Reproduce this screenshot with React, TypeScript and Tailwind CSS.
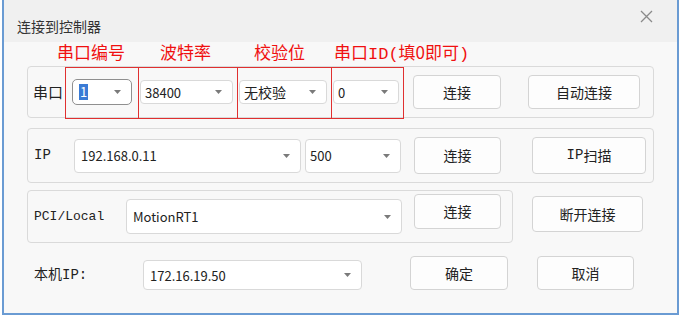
import React from "react";

const cjk = { fontFamily: '"Noto Sans CJK SC", "Noto Sans", sans-serif' };
const mono = { fontFamily: '"Liberation Mono", "Noto Sans CJK SC", monospace' };

function Arrow() {
  return (
    <svg width="7" height="4" viewBox="0 0 7 4" className="shrink-0">
      <path d="M0 0 L7 0 L3.5 4 Z" fill="#7a7a7a" />
    </svg>
  );
}

function Select({
  w,
  h = 24,
  children,
}: {
  w: string;
  h?: number;
  children: React.ReactNode;
}) {
  return (
    <div
      className={`${w} flex items-center justify-between rounded-[4px] border border-[#d9d9d9] bg-white pl-[4px] pr-[10px] text-[13px] text-[#222]`}
      style={{ ...cjk, height: h }}
    >
      <span className="leading-none">{children}</span>
      <Arrow />
    </div>
  );
}

function Btn({ w, h = 34, children }: { w: string; h?: number; children: React.ReactNode }) {
  return (
    <div
      className={`${w} flex items-center justify-center rounded-[4px] border border-[#d4d4d4] bg-[#fdfdfd] text-[14px] text-[#222]`}
      style={{ ...cjk, height: h }}
    >
      {children}
    </div>
  );
}

export default function App() {
  return (
    <div className="h-[317px] w-[682px] bg-white">
      <div className="ml-[2px] flex h-[315px] w-[677px] flex-col border-x-2 border-b-2 border-[#6a9bd3] bg-[#f8f8f8]">
        {/* title bar */}
        <div className="flex h-[42px] shrink-0 items-center justify-between bg-[#f0f0f0] pl-[13px] pr-[24px]">
          <span className="pt-[10px] text-[14px] text-[#333]" style={cjk}>
            连接到控制器
          </span>
          <svg width="13" height="13" viewBox="0 0 13 13" className="mb-[10px]">
            <path d="M1 1 L12 12 M12 1 L1 12" stroke="#8a8a8a" strokeWidth="1.3" />
          </svg>
        </div>

        {/* red labels */}
        <div className="relative h-[22px] text-[17px] leading-[20px] text-[#f01010]" style={cjk}>
          <span className="absolute left-[53px] top-[0px]">串口编号</span>
          <span className="absolute left-[156px] top-[0px]">波特率</span>
          <span className="absolute left-[250px] top-[0px]">校验位</span>
          <span className="absolute left-[330px] top-[0px]">
            串口<span style={mono}>ID(</span>填0即可<span style={mono}>)</span>
          </span>
        </div>

        {/* group 1 */}
        <div className="relative ml-[23px] mt-[2px] flex h-[52px] w-[627px] items-center rounded-[4px] border border-[#dadada] pl-[5px]">
          <span className="w-[39px] text-[15px] text-[#222]" style={cjk}>
            串口
          </span>
          <div
            className="flex h-[26px] w-[60px] items-center justify-between rounded-[5px] border border-[#8f8f8f] bg-white pl-[6px] pr-[10px] text-[13px]"
            style={cjk}
          >
            <span className="bg-[#3a7bd5] px-[1px] leading-[16px] text-white">1</span>
            <Arrow />
          </div>
          <div className="ml-[8px]">
            <Select w="w-[93px]">38400</Select>
          </div>
          <div className="ml-[6px]">
            <Select w="w-[88px]">
              <span className="text-[14px]">无校验</span>
            </Select>
          </div>
          <div className="ml-[6px]">
            <Select w="w-[66px]">0</Select>
          </div>
          <div className="ml-[14px]">
            <Btn w="w-[88px]">连接</Btn>
          </div>
          <div className="ml-[27px]">
            <Btn w="w-[112px]">自动连接</Btn>
          </div>
          {/* red annotation boxes */}
          <div className="pointer-events-none absolute left-[37px] top-[0px] flex h-[52px] w-[339px] border border-[#e03030]">
            <div className="w-[73px] border-r border-[#e03030]" />
            <div className="w-[99px] border-r border-[#e03030]" />
            <div className="w-[94px] border-r border-[#e03030]" />
            <div className="flex-1" />
          </div>
        </div>

        {/* group 2 */}
        <div className="ml-[23px] mt-[10px] flex h-[55px] w-[627px] items-center rounded-[4px] border border-[#dadada] pl-[6px]">
          <span className="w-[40px] text-[14px] text-[#222]" style={mono}>
            IP
          </span>
          <div className="flex items-center gap-[4px]">
            <Select w="w-[227px]" h={34}>
              <span className="pl-[2px]">192.168.0.11</span>
            </Select>
            <Select w="w-[96px]" h={34}>
              500
            </Select>
          </div>
          <div className="ml-[13px]">
            <Btn w="w-[87px]" h={37}>
              连接
            </Btn>
          </div>
          <div className="ml-[31px]">
            <Btn w="w-[114px]" h={37}>
              <span style={mono} className="text-[14px]">IP</span>扫描
            </Btn>
          </div>
        </div>

        {/* group 3 + button */}
        <div className="mt-[7px] flex items-start">
          <div className="ml-[23px] flex h-[53px] w-[486px] items-center rounded-[4px] border border-[#dadada] pl-[6px]">
            <span className="w-[92px] text-[13px] text-[#222]" style={mono}>
              PCI/Local
            </span>
            <Select w="w-[276px]" h={35}>
              <span className="pl-[2px]">MotionRT1</span>
            </Select>
            <div className="ml-[12px] -mt-[10px]">
              <Btn w="w-[87px]" h={35}>
                连接
              </Btn>
            </div>
          </div>
          <div className="ml-[19px] mt-[6px]">
            <Btn w="w-[111px]" h={36}>
              断开连接
            </Btn>
          </div>
        </div>

        {/* bottom row */}
        <div className="ml-[30px] mt-[13px] flex items-start">
          <span className="mt-[7px] w-[109px] text-[14px] text-[#222]" style={cjk}>
            本机<span style={mono}>IP:</span>
          </span>
          <div className="mt-[4px]">
            <Select w="w-[219px]" h={30}>
              <span className="pl-[2px]">172.16.19.50</span>
            </Select>
          </div>
          <div className="ml-[48px]">
            <Btn w="w-[98px]">确定</Btn>
          </div>
          <div className="ml-[29px]">
            <Btn w="w-[97px]">取消</Btn>
          </div>
        </div>
      </div>
    </div>
  );
}
